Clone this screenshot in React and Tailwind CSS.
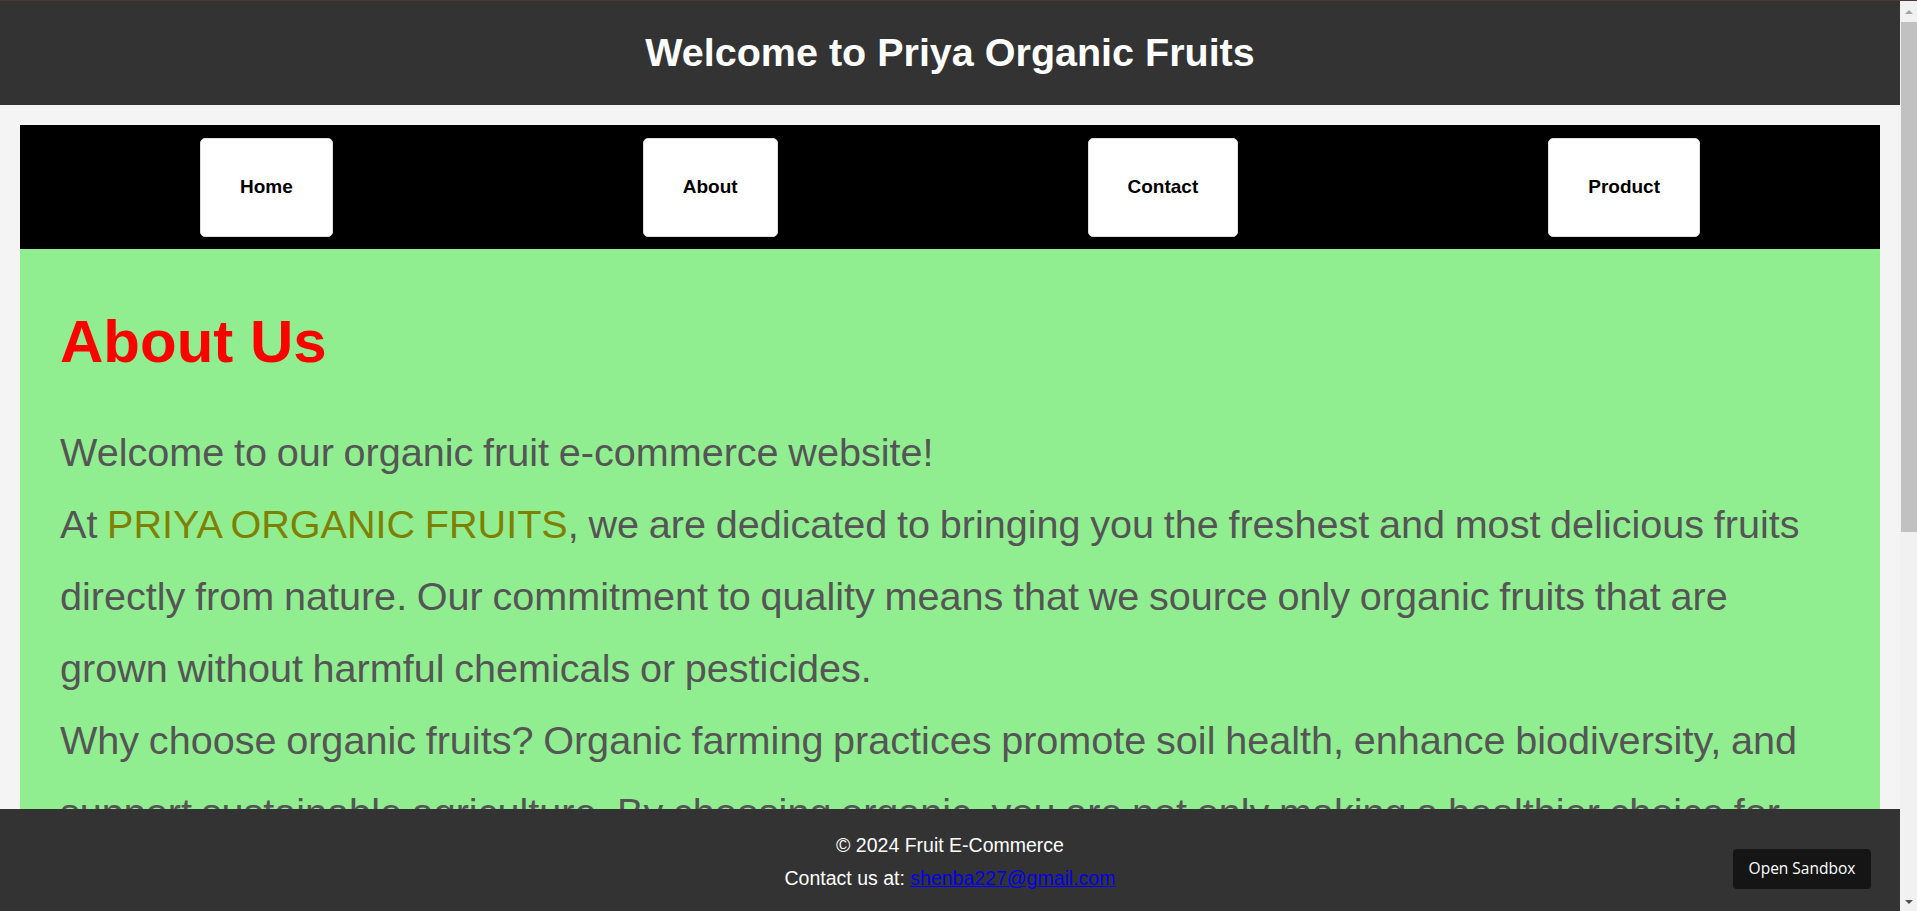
import React from "react";

export default function App() {
  const navItems = ["Home", "About", "Contact", "Product"];
  return (
    <div className="relative flex h-[911px] w-[1917px] overflow-hidden bg-[#f4f4f4] font-['Liberation_Sans',Arial,sans-serif]">
      <div className="absolute left-0 right-0 top-0 z-20 h-px bg-[#4a3a38]" />
      <div className="min-w-0 flex-1 overflow-hidden">
        <header className="flex h-[105px] items-center justify-center bg-[#333333]">
          <h1 className="text-[39.5px] font-bold leading-normal text-white">
            Welcome to Priya Organic Fruits
          </h1>
        </header>
        <div className="px-[20px] pt-[20px]">
          <nav className="flex h-[124px] items-center justify-around bg-black px-[25px]">
            {navItems.map((item) => (
              <div
                key={item}
                className="flex h-[99px] items-center justify-center rounded-[5px] border border-[#dddddd] bg-white px-[39px] text-[19px] font-bold text-black"
              >
                {item}
              </div>
            ))}
          </nav>
          <section className="bg-[#90ee90] px-[40px] pt-[48px] pb-[40px]">
            <h2 className="mb-[29px] text-[60px] font-bold leading-normal text-[#ff0000]">
              About Us
            </h2>
            <p className="text-[39.6px] leading-[72px] text-[#555555] [word-spacing:-1.3px]">
              Welcome to our organic fruit e-commerce website!
              <br />
              At <span className="text-[#808000]">PRIYA ORGANIC FRUITS</span>, we are dedicated to bringing you the
              freshest and most delicious fruits directly from nature. Our commitment to quality means that we
              source only organic fruits that are grown without harmful chemicals or pesticides.
              <br />
              Why choose organic fruits? Organic farming practices promote soil health, enhance biodiversity, and
              support sustainable agriculture. By choosing organic, you are not only making a healthier choice for
              yourself but also contributing to a more sustainable planet.
              <br />
              Explore our wide range of seasonal fruits, carefully picked and delivered fresh to your doorstep.
            </p>
          </section>
        </div>
      </div>
      <div className="flex w-[17px] flex-col bg-[#f1f1f1]">
        <div className="flex h-[22px] items-start justify-center pt-[10px] pl-[1px]">
          <svg width="8" height="4" viewBox="0 0 8 4">
            <polygon points="0,4 4,0 8,4" fill="#a3a3a3" />
          </svg>
        </div>
        <div className="ml-[1px] h-[510px] bg-[#c1c1c1]" />
        <div className="flex-1" />
        <div className="flex h-[17px] items-start justify-center pt-[6px] pl-[1px]">
          <svg width="8" height="4" viewBox="0 0 8 4">
            <polygon points="0,0 8,0 4,4" fill="#505050" />
          </svg>
        </div>
      </div>
      <footer className="absolute bottom-0 left-0 right-[17px] flex h-[102px] flex-col items-center gap-[4px] bg-[#333333] pt-[22px] text-[19.5px] leading-normal text-white">
        <p>© 2024 Fruit E-Commerce</p>
        <p>
          Contact us at:{" "}
          <a href="#" className="text-[#0000ee] underline">
            shenba227@gmail.com
          </a>
        </p>
      </footer>
      <div className="absolute left-[1733px] top-[849px] flex h-[40px] w-[138px] items-center justify-center rounded-[4px] bg-[#151515] font-['Open_Sans',sans-serif] text-[15.5px] text-white">
        Open Sandbox
      </div>
    </div>
  );
}
